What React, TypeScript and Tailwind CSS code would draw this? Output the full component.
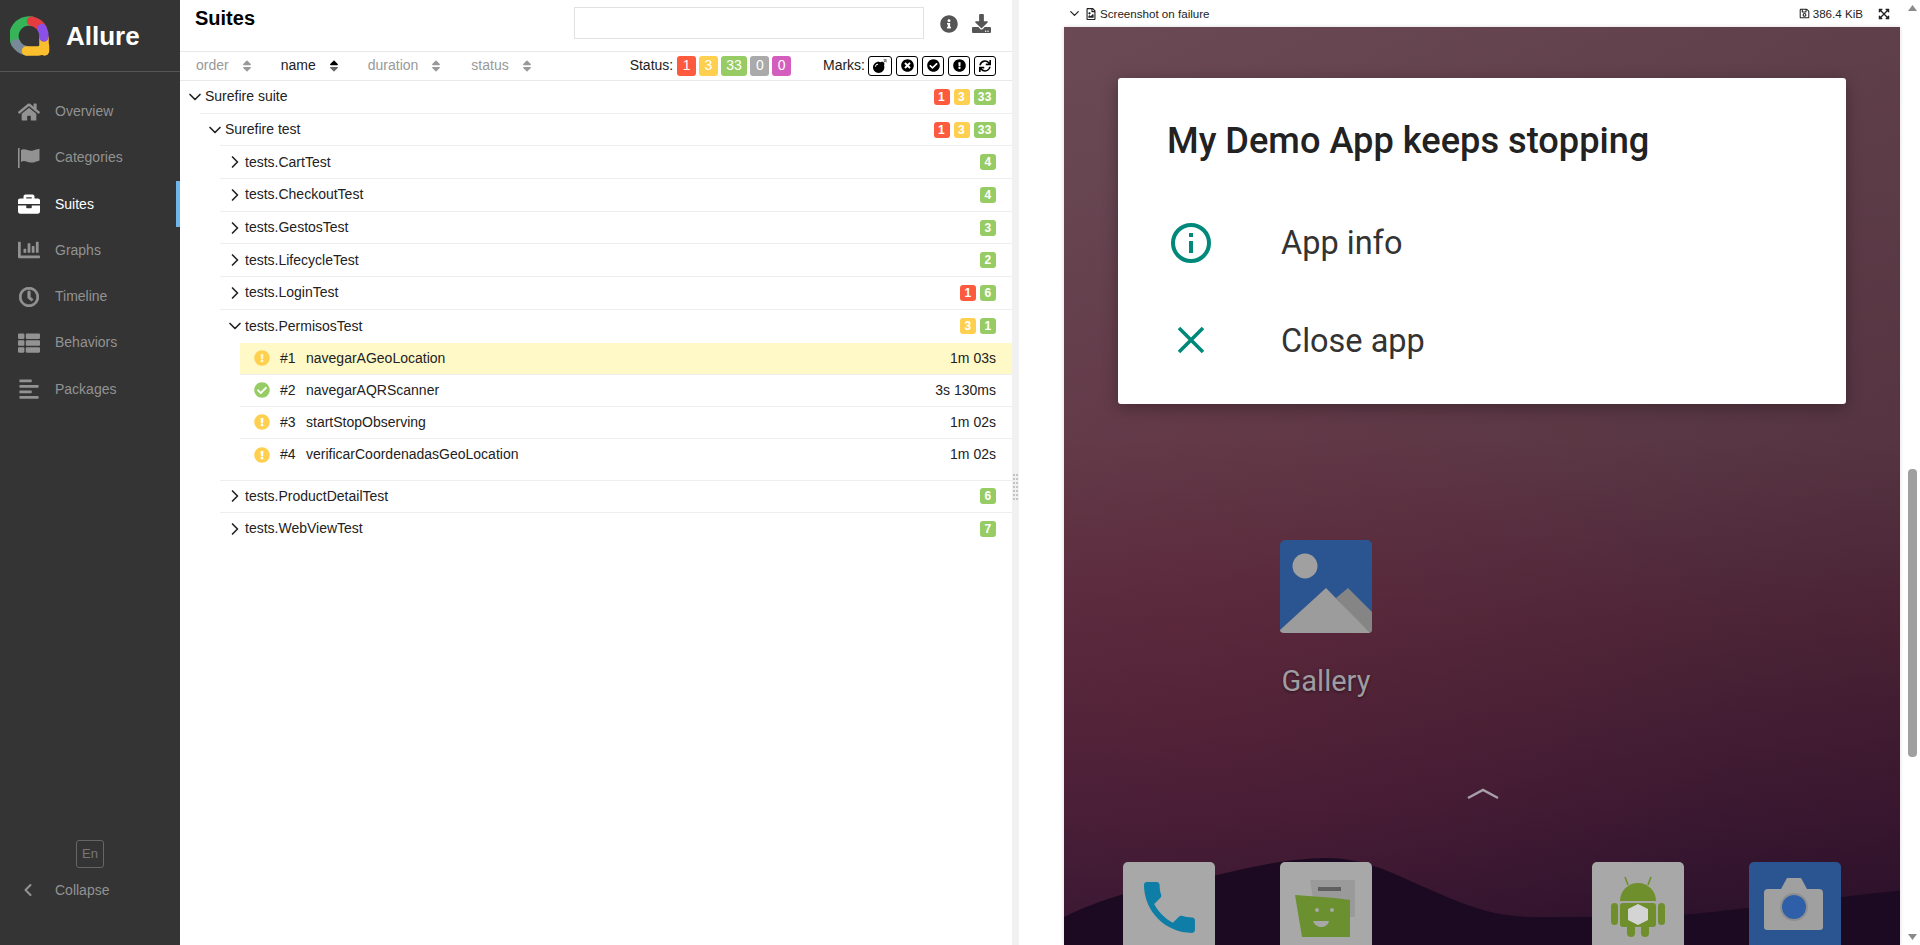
import type { ReactNode } from "react";
import { ChevronDown, ChevronLeft, ChevronRight } from "lucide-react";
import {
  FaAlignLeft,
  FaBomb,
  FaBriefcase,
  FaChartBar,
  FaCheckCircle,
  FaDownload,
  FaExclamationCircle,
  FaExpandArrowsAlt,
  FaHome,
  FaInfoCircle,
  FaRegClock,
  FaRegFileImage,
  FaRegSave,
  FaSort,
  FaSortDown,
  FaSortUp,
  FaSync,
  FaThList,
  FaTimesCircle,
} from "react-icons/fa";

function FlagIcon() {
  return (
    <svg width="22" height="20" viewBox="0 0 22 20" fill="currentColor">
      <rect x="0" y="0" width="1.6" height="20" />
      <path d="M3 2C7-.5 11 4 15 2.5C17 1.8 19 1.2 21.5 .8V12.5C18 13.5 16 15 12.5 14.5C9 14 6 11.5 3 14Z" />
    </svg>
  );
}

const NAV = [
  { label: "Overview", icon: <FaHome size={22} /> },
  { label: "Categories", icon: <FlagIcon /> },
  { label: "Suites", icon: <FaBriefcase size={22} />, active: true },
  { label: "Graphs", icon: <FaChartBar size={22} /> },
  { label: "Timeline", icon: <FaRegClock size={20} stroke="currentColor" strokeWidth={24} /> },
  { label: "Behaviors", icon: <FaThList size={22} /> },
  { label: "Packages", icon: <FaAlignLeft size={22} /> },
];

const BADGE: Record<string, string> = {
  red: "bg-[#fd5a3e]",
  yellow: "bg-[#ffd050]",
  green: "bg-[#97cc64]",
  gray: "bg-[#aaaaaa]",
  purple: "bg-[#d35ebe]",
};

function Logo() {
  return (
    <svg width="40" height="40" viewBox="0 0 40 40" fill="none" strokeWidth="9.5" strokeLinecap="round">
      <path d="M21.6 5.2A15 15 0 0 0 6 27.5" stroke="#35b558" />
      <path d="M6 27.5A15 15 0 0 0 16.4 34.8" stroke="#78899a" />
      <path d="M16.4 35H28A6 6 0 0 0 34 29V22" stroke="#fbbf2d" />
      <path d="M34.5 30V35" stroke="#fbbf2d" />
      <path d="M21.6 5.2A15 15 0 0 1 32 12.5" stroke="#e53c3f" />
      <path d="M32 12.5A15 15 0 0 1 33.8 21" stroke="#8b50e6" />
    </svg>
  );
}

function Sidebar() {
  return (
    <aside className="flex h-full w-[180px] shrink-0 flex-col bg-[#343434] text-[14px] text-[#929292]">
      <div className="flex h-[72px] items-center border-b border-[#555555] pl-[10px] pt-[1px]">
        <Logo />
        <span className="ml-[16px] text-[26px] font-bold text-white">Allure</span>
      </div>
      <nav className="mt-[16.5px] flex flex-col">
        {NAV.map((n) => (
          <div
            key={n.label}
            className={`flex h-[46.25px] items-center border-r-4 ${
              n.active ? "border-[#6eb6e8] text-white" : "border-transparent"
            }`}
          >
            <span className="flex w-[55px] justify-center pl-[4px] pr-[1px]">{n.icon}</span>
            <span>{n.label}</span>
          </div>
        ))}
      </nav>
      <div className="mt-auto flex flex-col pb-[41px]">
        <div className="mx-auto flex h-[28px] w-[28px] items-center justify-center rounded-[3px] border border-[#666666] text-[13px] text-[#777777]">
          En
        </div>
        <div className="mt-[8px] flex h-[28px] items-center">
          <span className="flex w-[55px] justify-center">
            <ChevronLeft size={20} strokeWidth={2.5} />
          </span>
          <span>Collapse</span>
        </div>
      </div>
    </aside>
  );
}

function Badge({ tone, n, big }: { tone: string; n: number; big?: boolean }) {
  return (
    <span
      className={`flex items-center justify-center rounded-[3px] text-white ${BADGE[tone]} ${
        big
          ? "h-[20px] min-w-[18px] px-[5.5px] text-[14px]"
          : "h-[16px] min-w-[16px] px-[4px] text-[12px] font-bold tracking-[0.5px]"
      }`}
    >
      {n}
    </span>
  );
}

function Counts({ red, yellow, green }: { red?: number; yellow?: number; green: number }) {
  return (
    <div className="ml-auto flex gap-[4px]">
      {red ? <Badge tone="red" n={red} /> : null}
      {yellow ? <Badge tone="yellow" n={yellow} /> : null}
      <Badge tone="green" n={green} />
    </div>
  );
}

function SortItem({ label, active, className }: { label: string; active?: boolean; className: string }) {
  return (
    <div className={`flex items-center gap-[11px] ${className}`}>
      <span className={active ? "text-[#222222]" : "text-[#999999]"}>{label}</span>
      {active ? (
        <span className="relative h-[14px] w-[14px] text-[#666666]">
          <FaSortDown size={14} className="absolute left-0 top-0" />
          <FaSortUp size={14} className="absolute left-0 top-0 text-black" />
        </span>
      ) : (
        <FaSort size={14} className="text-[#999999]" />
      )}
    </div>
  );
}

function Mark({ children, className }: { children: ReactNode; className: string }) {
  return (
    <span className={`flex h-[20px] items-center justify-center rounded-[3px] border border-black text-black ${className}`}>
      {children}
    </span>
  );
}

function TreeRow({
  open,
  line,
  inner,
  children,
}: {
  open: boolean;
  line: string;
  inner: string;
  children: ReactNode;
}) {
  return (
    <div className={line}>
      <div className={`flex h-full items-center pr-[16px] ${inner}`}>
        <span className="flex w-[20px] justify-center">
          {open ? <ChevronDown size={20} strokeWidth={2} /> : <ChevronRight size={20} strokeWidth={2} />}
        </span>
        {children}
      </div>
    </div>
  );
}

function GroupRow({ name, green, red, short }: { name: string; green: number; red?: number; short?: boolean }) {
  return (
    <TreeRow
      open={false}
      line={short ? "ml-[40px] h-[32px] border-b border-[#eeeeee] last:border-b-0" : "ml-[40px] h-[32.7px] border-b border-[#eeeeee]"}
      inner="-ml-[40px] pl-[45px]"
    >
      <span>{name}</span>
      <Counts red={red} green={green} />
    </TreeRow>
  );
}

function TestRow({
  n,
  name,
  time,
  passed,
  selected,
}: {
  n: number;
  name: string;
  time: string;
  passed?: boolean;
  selected?: boolean;
}) {
  return (
    <div
      className={`flex h-[32px] items-center border-b border-[#eeeeee] pl-[14px] pr-[16px] last:border-b-0 ${
        selected ? "bg-[#fff9c8]" : ""
      }`}
    >
      {passed ? (
        <FaCheckCircle size={16} className="text-[#97cc64]" />
      ) : (
        <FaExclamationCircle size={16} className="text-[#ffd050]" />
      )}
      <span className="ml-[10px] w-[26px]">#{n}</span>
      <span>{name}</span>
      <span className="ml-auto">{time}</span>
    </div>
  );
}

function SuitesPane() {
  return (
    <section className="h-full w-[832px] shrink-0 text-[14px] text-[#222222]">
      <header className="flex h-[52px] items-start border-b border-[#e8e8e8] pl-[15px]">
        <h1 className="mt-[6px] text-[20px] font-bold leading-[24px] text-black">Suites</h1>
        <div className="ml-auto mt-[7px] h-[32px] w-[350px] border border-[#e2e2e2]" />
        <FaInfoCircle size={18} className="ml-[16px] mt-[15px] text-[#555555]" />
        <FaDownload size={19} className="ml-[14px] mr-[21px] mt-[14px] text-[#555555]" />
      </header>
      <div className="flex h-[29px] items-center border-b border-[#e8e8e8] pb-[1px]">
        <SortItem label="order" className="ml-[16px]" />
        <SortItem label="name" active className="ml-[27px]" />
        <SortItem label="duration" className="ml-[27px]" />
        <SortItem label="status" className="ml-[28px]" />
        <div className="ml-auto flex items-center pr-[16px]">
          <span>Status:</span>
          <div className="ml-[4px] flex gap-[3px]">
            <Badge big tone="red" n={1} />
            <Badge big tone="yellow" n={3} />
            <Badge big tone="green" n={33} />
            <Badge big tone="gray" n={0} />
            <Badge big tone="purple" n={0} />
          </div>
          <span className="ml-[32px]">Marks:</span>
          <div className="ml-[3px] flex gap-[4px]">
            <Mark className="w-[24px]">
              <FaBomb size={14} />
            </Mark>
            <Mark className="w-[22px]">
              <FaTimesCircle size={13} />
            </Mark>
            <Mark className="w-[22px]">
              <FaCheckCircle size={13} />
            </Mark>
            <Mark className="w-[22px]">
              <FaExclamationCircle size={13} />
            </Mark>
            <Mark className="w-[22px]">
              <FaSync size={12} />
            </Mark>
          </div>
        </div>
      </div>

      <TreeRow open line="ml-[20px] h-[32.7px] border-b border-[#eeeeee]" inner="-ml-[20px] pl-[5px]">
        <span>Surefire suite</span>
        <Counts red={1} yellow={3} green={33} />
      </TreeRow>
      <TreeRow open line="ml-[40px] h-[32.7px] border-b border-[#eeeeee]" inner="-ml-[40px] pl-[25px]">
        <span>Surefire test</span>
        <Counts red={1} yellow={3} green={33} />
      </TreeRow>
      <GroupRow name="tests.CartTest" green={4} />
      <GroupRow name="tests.CheckoutTest" green={4} />
      <GroupRow name="tests.GestosTest" green={3} />
      <GroupRow name="tests.LifecycleTest" green={2} />
      <GroupRow name="tests.LoginTest" red={1} green={6} />
      <div className="ml-[40px] border-b border-[#eeeeee] pb-[9px]">
        <div className="-ml-[40px] flex h-[32.7px] items-center pl-[45px] pr-[16px]">
          <span className="flex w-[20px] justify-center">
            <ChevronDown size={20} strokeWidth={2} />
          </span>
          <span>tests.PermisosTest</span>
          <div className="ml-auto flex gap-[4px]">
            <Badge tone="yellow" n={3} />
            <Badge tone="green" n={1} />
          </div>
        </div>
        <div className="ml-[20px]">
          <TestRow n={1} name="navegarAGeoLocation" time="1m 03s" selected />
          <TestRow n={2} name="navegarAQRScanner" time="3s 130ms" passed />
          <TestRow n={3} name="startStopObserving" time="1m 02s" />
          <TestRow n={4} name="verificarCoordenadasGeoLocation" time="1m 02s" />
        </div>
      </div>
      <GroupRow name="tests.ProductDetailTest" green={6} short />
      <GroupRow name="tests.WebViewTest" green={7} short />
    </section>
  );
}

function Splitter() {
  return (
    <div className="flex h-full w-[7px] shrink-0 items-center justify-center bg-[#f1f1f1]">
      <div className="mt-[28px] grid grid-cols-2 gap-x-[1px] gap-y-[2px]">
        {Array.from({ length: 14 }).map((_, i) => (
          <span key={i} className="h-[2px] w-[2px] bg-[#c4c4c4]" />
        ))}
      </div>
    </div>
  );
}

function DockTile({ className, children }: { className: string; children: ReactNode }) {
  return (
    <div className={`absolute top-[835px] h-[92px] w-[92px] rounded-[5px] ${className}`}>{children}</div>
  );
}

function PhoneShot() {
  return (
    <div className="relative ml-[45px] mr-[4px] flex-1 overflow-hidden bg-[radial-gradient(ellipse_at_15%_70%,rgba(120,30,50,0.22),transparent_55%),linear-gradient(90deg,rgba(255,255,255,0.03),rgba(0,0,0,0.07)),linear-gradient(180deg,#66444f_0%,#5c3846_45%,#4f2538_65%,#3d1832_85%,#2b0f2c_100%)] shadow-[0_0_4px_rgba(0,0,0,0.15)]">
      <svg className="absolute bottom-0 left-0" width="840" height="90" viewBox="0 828 840 90">
        <path
          d="M0 890C30 875 70 862 110 856C160 850 200 832 263 831C300 832 320 842 360 860C400 878 430 890 470 890H570C630 890 700 878 840 863V918H0Z"
          fill="#1b0a21"
        />
      </svg>

      {/* gallery icon */}
      <div className="absolute left-[216px] top-[513px] flex flex-col items-center">
        <svg width="92" height="93" viewBox="0 0 92 93">
          <rect width="92" height="93" rx="5" fill="#2b5590" />
          <circle cx="25" cy="26" r="12.5" fill="#a0a0a0" />
          <path d="M68 48L92 72V90Q92 93 88 93L56 58Z" fill="#858585" />
          <path d="M46 48L90 93H4Q0 93 0 90Z" fill="#9c9c9c" />
        </svg>
        <span className="mt-[31px] font-['Roboto',sans-serif] text-[29px] leading-[34px] text-[#a09ca0] [text-shadow:0_1px_3px_rgba(0,0,0,0.5)]">
          Gallery
        </span>
      </div>

      <svg className="absolute left-[402px] top-[761px]" width="34" height="12" viewBox="0 0 34 12">
        <path d="M2 10L17 2L32 10" fill="none" stroke="#a8a0a8" strokeWidth="2.5" />
      </svg>

      <DockTile className="left-[59px] bg-[#a8a8a8]">
        <svg width="92" height="92" viewBox="0 0 92 92">
          <g transform="translate(12.5 11.5) scale(2.83)">
            <path
              d="M6.62 10.79c1.44 2.83 3.76 5.14 6.59 6.59l2.2-2.2c.27-.27.67-.36 1.02-.24 1.12.37 2.33.57 3.57.57.55 0 1 .45 1 1V20c0 .55-.45 1-1 1-9.39 0-17-7.61-17-17 0-.55.45-1 1-1h3.5c.55 0 1 .45 1 1 0 1.25.2 2.45.57 3.57.11.35.03.74-.25 1.02l-2.2 2.2z"
              fill="#0f7ea6"
            />
          </g>
        </svg>
      </DockTile>
      <DockTile className="left-[216px] bg-[#a8a8a8]">
        <svg width="92" height="92" viewBox="0 0 92 92">
          <path d="M30 18H75V55H36Z" fill="#9a9a9a" />
          <rect x="38" y="25" width="23" height="4" fill="#5f5f5f" />
          <path d="M15 33L55 36L70 38V75H22Z" fill="#6a9030" />
          <circle cx="37" cy="48" r="2" fill="#a8a8a8" />
          <circle cx="52" cy="48" r="2" fill="#a8a8a8" />
          <path d="M33 59H49C47 67 36 67 33 59Z" fill="#a8a8a8" />
        </svg>
      </DockTile>
      <DockTile className="left-[528px] bg-[#a8a8a8]">
        <svg width="92" height="92" viewBox="0 0 92 92">
          <path d="M28 39A18 18 0 0 1 64 39Z" fill="#6f8f2c" />
          <rect x="28" y="41" width="36" height="24" rx="3" fill="#6f8f2c" />
          <rect x="19" y="41" width="7" height="22" rx="3.5" fill="#6f8f2c" />
          <rect x="66" y="41" width="7" height="22" rx="3.5" fill="#6f8f2c" />
          <rect x="35" y="62" width="8" height="13" rx="4" fill="#6f8f2c" />
          <rect x="49" y="62" width="8" height="13" rx="4" fill="#6f8f2c" />
          <path d="M36 23L33 15M56 23L59 15" stroke="#6f8f2c" strokeWidth="1.6" />
          <path d="M46 42L56 47V58L46 63L36 58V47Z" fill="#d4d4d4" />
        </svg>
      </DockTile>
      <DockTile className="left-[685px] bg-[#2b5590]">
        <svg width="92" height="92" viewBox="0 0 92 92">
          <path d="M15 31Q15 27 19 27H32L38 16H52L58 27H70Q74 27 74 31V65Q74 68 71 68H18Q15 68 15 65Z" fill="#a0a0a0" />
          <circle cx="45" cy="45" r="14" fill="#8f8f8f" />
          <circle cx="45" cy="45" r="12" fill="#2f5fa8" />
        </svg>
      </DockTile>

      <div className="absolute left-[54px] top-[51px] h-[326px] w-[728px] rounded-[3px] bg-white shadow-[0_4px_16px_rgba(0,0,0,0.3)]">
        <h2 className="pl-[49px] pt-[40px] pb-[29px] font-['Roboto',sans-serif] text-[36.2px] font-medium leading-[46px] text-[#222222]">
          My Demo App keeps stopping
        </h2>
        <div className="flex h-[99px] items-center pl-[50px] font-['Roboto',sans-serif] text-[32.5px] text-[#333333]">
          <svg width="46" height="46" viewBox="0 0 46 46" fill="none" stroke="#00897b" strokeWidth="4">
            <circle cx="23" cy="23" r="18" />
            <path d="M23 21V33M23 13V17" />
          </svg>
          <span className="ml-[67px] pt-[2px]">App info</span>
        </div>
        <div className="flex h-[99px] items-center pl-[50px] font-['Roboto',sans-serif] text-[32.5px] text-[#333333]">
          <svg width="46" height="46" viewBox="0 0 46 46" fill="none" stroke="#00897b" strokeWidth="3.6" className="-mt-[4px]">
            <path d="M11 11L35 35M35 11L11 35" />
          </svg>
          <span className="ml-[67px]">Close app</span>
        </div>
      </div>
    </div>
  );
}

function AttachmentPane() {
  return (
    <section className="flex h-full min-w-0 flex-1">
      <div className="flex min-w-0 flex-1 flex-col">
        <div className="flex h-[27px] shrink-0 items-center pl-[48px] pr-[14px] text-[11.6px] text-[#222222]">
          <ChevronDown size={15} strokeWidth={2} />
          <FaRegFileImage size={12} className="ml-[3px]" />
          <span className="ml-[3px]">Screenshot on failure</span>
          <FaRegSave size={11} className="ml-auto" />
          <span className="ml-[3px]">386.4 KiB</span>
          <FaExpandArrowsAlt size={12} className="ml-[15px]" />
        </div>
        <PhoneShot />
      </div>
      <div className="flex w-[16px] shrink-0 flex-col items-center text-[#8a8a8a]">
        <svg className="mt-[5px]" width="9" height="6" viewBox="0 0 9 6">
          <path d="M4.5 0L9 6H0Z" fill="currentColor" />
        </svg>
        <div className="mt-[458px] h-[288px] w-[9px] rounded-[4px] bg-[#a0a0a0]" />
        <svg className="mt-auto mb-[5px]" width="9" height="6" viewBox="0 0 9 6">
          <path d="M0 0H9L4.5 6Z" fill="currentColor" />
        </svg>
      </div>
    </section>
  );
}

export default function App() {
  return (
    <div className="flex h-screen w-full overflow-hidden bg-white font-['Liberation_Sans',Arial,sans-serif]">
      <Sidebar />
      <SuitesPane />
      <Splitter />
      <AttachmentPane />
    </div>
  );
}
